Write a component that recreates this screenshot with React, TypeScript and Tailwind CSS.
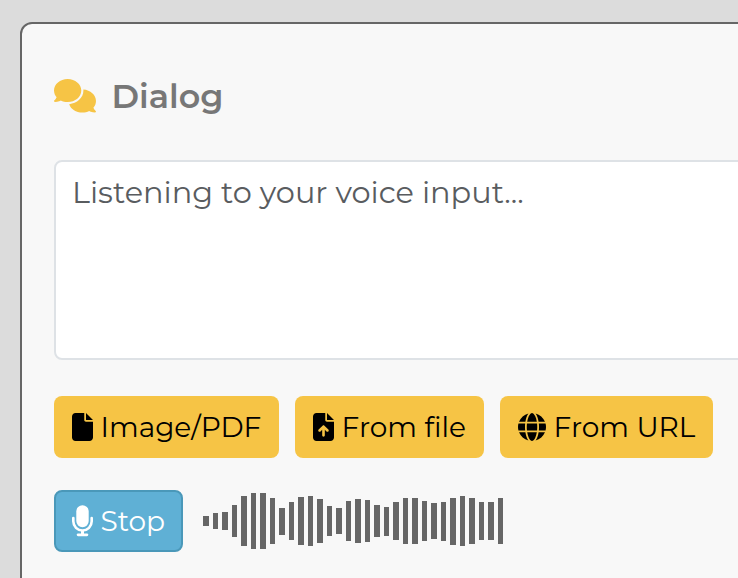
import type { ReactNode } from "react";
import { FaComments, FaFile, FaFileArrowUp, FaGlobe } from "react-icons/fa6";

const levels = [
  10, 16, 17.5, 31.5, 49.5, 56, 55.5, 46.5, 27, 38, 48, 49.5, 44, 29.5, 26.5, 39.5,
  43.5, 42, 32, 29, 38, 45.5, 45.5, 40, 36, 39, 47, 49.5, 45.5, 38, 38, 46,
];

function SourceButton({ icon, width, children }: { icon: ReactNode; width: string; children: ReactNode }) {
  return (
    <button className={`flex h-[62px] shrink-0 items-center whitespace-nowrap rounded-lg bg-[#f6c445] pl-[18px] text-[28px] text-black ${width}`}>
      {icon}
      {children}
    </button>
  );
}

function MicIcon() {
  return (
    <svg className="mb-px mr-[7.5px] h-8 w-[21px] shrink-0" viewBox="0 0 21 32" fill="none">
      <rect x="4.3" y="0.3" width="12.4" height="22" rx="6.2" fill="currentColor" />
      <path d="M1.3 13V16.3a9.2 9.2 0 0 0 18.4 0V13" stroke="currentColor" strokeWidth="2.6" strokeLinecap="round" />
      <path d="M10.5 26V29.5" stroke="currentColor" strokeWidth="3" />
      <path d="M6.1 29.8H14.9" stroke="currentColor" strokeWidth="2.8" strokeLinecap="round" />
    </svg>
  );
}

export default function App() {
  return (
    <div className="h-[578px] w-[738px] overflow-hidden bg-[#dcdcdc] pl-5 pt-[22px] font-[Montserrat,Inter,sans-serif]">
      <main className="h-[700px] w-[900px] rounded-tl-xl border-2 border-[#666] bg-[#f8f8f8] pl-8 pt-12">
        <h1 className="flex h-12 items-center text-[33.4px] font-semibold text-[#777]">
          <FaComments className="mr-[15.5px] h-[33.6px] w-[42px] shrink-0 text-[#f6c445]" />
          Dialog
        </h1>
        <div className="mt-10 h-[200px] w-[840px] rounded-lg border-2 border-[#dee2e6] bg-white px-4 pt-2 text-[30.4px] leading-[45px] text-[#595c5f]">
          Listening to your voice input...
        </div>
        <div className="mt-9 flex gap-4">
          <SourceButton width="w-[225px]" icon={<FaFile className="mr-[7.5px] h-7 w-[21px] shrink-0" />}>
            Image/PDF
          </SourceButton>
          <SourceButton width="w-[189px]" icon={<FaFileArrowUp className="mr-[7.5px] h-7 w-[21px] shrink-0" />}>
            From file
          </SourceButton>
          <SourceButton width="w-[213px]" icon={<FaGlobe className="mr-[7.5px] size-7 shrink-0" />}>
            From URL
          </SourceButton>
        </div>
        <div className="mt-8 flex h-[62px] items-center">
          <button className="flex h-[62px] w-[129px] items-center rounded-lg border-2 border-[#4a98b9] bg-[#5fb0d5] pl-4 text-[28px] text-white">
            <MicIcon />
            Stop
          </button>
          <div className="ml-5 flex h-[62px] items-center gap-[4px]">
            {levels.map((level, i) => (
              <span key={i} className="w-[5.5px] shrink-0 bg-[#666]" style={{ height: level }} />
            ))}
          </div>
        </div>
      </main>
    </div>
  );
}
